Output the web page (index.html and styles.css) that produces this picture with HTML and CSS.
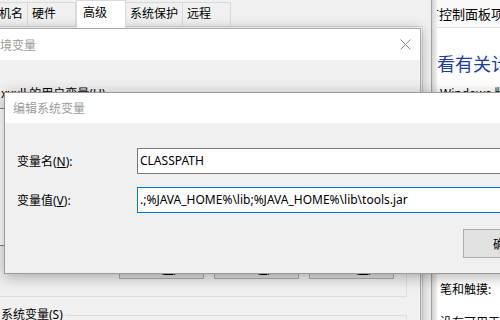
FILE: index.html
```html
<!DOCTYPE html>
<html lang="zh-CN">
<head>
    <meta charset="UTF-8">
    <title>编辑系统变量</title>
    <link rel="stylesheet" href="styles.css">
</head>
<body>
<div class="desk">

    <!-- control panel window, furthest back -->
    <div class="cpanel">
        <div class="cp-bar"><span class="cp-path">所有控制面板项</span></div>
        <div class="cp-body">
            <h1 class="cp-head">查看有关计算机的基本信息</h1>
            <ul class="cp-rows">
                <li>Windows 版本</li>
                <li>Windows 10 专业版</li>
                <li>© 2019 Microsoft Corporation</li>
                <li>系统</li>
                <li>处理器:</li>
                <li>已安装的内存(RAM):</li>
                <li>系统类型:</li>
                <li class="cp-pen">笔和触摸:</li>
                <li>没有可用于此显示器的笔或触控输入</li>
            </ul>
        </div>
    </div>

    <!-- system properties -->
    <div class="sysprop">
        <div class="tabs">
            <span class="tab">计算机名</span>
            <span class="tab">硬件</span>
            <span class="tab active">高级</span>
            <span class="tab">系统保护</span>
            <span class="tab">远程</span>
        </div>
        <div class="tab-panel"></div>
    </div>

    <!-- environment variables -->
    <div class="env">
        <div class="titlebar">
            <span class="title">环境变量</span>
            <svg class="close" width="11" height="11" viewBox="0 0 11 11">
                <path d="M0.5 0.5 L10.5 10.5 M10.5 0.5 L0.5 10.5" stroke="#8c8c8c" stroke-width="1" fill="none"/>
            </svg>
        </div>
        <div class="env-body">
            <fieldset class="group">
                <legend>xxxll 的用户变量(<u>U</u>)</legend>
                <div class="list"></div>
                <div class="btn-row">
                    <button class="btn">新建(<u>N</u>)...</button>
                    <button class="btn">编辑(<u>E</u>)...</button>
                    <button class="btn">删除(<u>D</u>)</button>
                </div>
            </fieldset>
            <fieldset class="group sys-group">
                <legend>系统变量(<u>S</u>)</legend>
                <div class="list"></div>
            </fieldset>
        </div>
    </div>

    <!-- edit system variable -->
    <div class="edit">
        <div class="titlebar edit-titlebar">
            <span class="title">编辑系统变量</span>
        </div>
        <div class="edit-body">
            <div class="field">
                <label class="field-label">变量名(<u>N</u>):</label>
                <div class="input">CLASSPATH</div>
            </div>
            <div class="field">
                <label class="field-label">变量值(<u>V</u>):</label>
                <div class="input focus">.;%JAVA_HOME%\lib;%JAVA_HOME%\lib\tools.jar</div>
            </div>
            <div class="edit-actions">
                <button class="btn big">确定</button>
                <button class="btn big">取消</button>
            </div>
        </div>
    </div>

</div>
</body>
</html>
```

FILE: styles.css
```css
body {
    margin: 0;
    font-family: "Noto Sans", "Noto Sans CJK SC", sans-serif;
    font-size: 12px;
    color: #000;
}

.desk {
    position: relative;
    width: 500px;
    height: 320px;
    overflow: hidden;
    background: #f0f0f0;
}

/* control panel */
.cpanel {
    position: absolute;
    left: 437px;
    top: 0;
    width: 200px;
    height: 320px;
    background: #fff;
    overflow: hidden;
}

.cp-bar {
    height: 27px;
    border-bottom: 1px solid #e3e3e3;
    background: #f9f9f9;
    display: flex;
    align-items: center;
    font-size: 13px;
    white-space: nowrap;
}

.cp-path {
    margin-left: -24px;
}

.cp-body {
    padding-left: 3px;
}

.cp-head {
    margin: 24px 0 0 -21px;
    font-size: 18px;
    font-weight: normal;
    line-height: 24px;
    color: #1e3f9a;
    white-space: nowrap;
}

.cp-rows {
    list-style: none;
    margin: 10px 0 0;
    padding: 0;
}

.cp-rows li {
    line-height: 16px;
    margin-bottom: 12px;
    white-space: nowrap;
}

.cp-rows .cp-pen {
    margin-bottom: 17px;
}

/* system properties */
.sysprop {
    position: absolute;
    left: -40px;
    top: -6px;
    width: 472px;
    height: 340px;
    padding-top: 5px;
    box-sizing: border-box;
    border: 1px solid #a0a0a0;
    background: #f0f0f0;
    box-shadow: 0 0 6px rgba(0, 0, 0, 0.25);
}

.tabs {
    display: flex;
    align-items: flex-end;
    height: 26px;
    padding-left: 9px;
}

.tab {
    box-sizing: border-box;
    height: 24px;
    min-width: 48px;
    padding: 0 4px;
    line-height: 22px;
    border: 1px solid #d9d9d9;
    border-left: 0;
    border-bottom: 0;
    background: #f0f0f0;
    white-space: nowrap;
}

.tab:first-child {
    border-left: 1px solid #d9d9d9;
}

.tab.active {
    position: relative;
    z-index: 1;
    height: 28px;
    min-width: 50px;
    margin-bottom: -2px;
    padding-left: 6px;
    line-height: 24px;
    border-left: 1px solid #d9d9d9;
    background: #fff;
}

.tab-panel {
    height: 300px;
    margin: 0 8px;
    border: 1px solid #d9d9d9;
    background: #fff;
}

/* dialogs */
.titlebar {
    height: 31px;
    padding: 0 9px 0 7px;
    display: flex;
    align-items: center;
    justify-content: space-between;
    background: #fff;
    color: #9b9b9b;
    white-space: nowrap;
}

.close {
    display: block;
}

.env {
    position: absolute;
    left: -20px;
    top: 28px;
    width: 439px;
    height: 320px;
    border: 1px solid #aaa;
    background: #f0f0f0;
    box-shadow: 0 2px 12px rgba(0, 0, 0, 0.3);
}

.env-body {
    padding: 26px 13px 0 8px;
}

.group {
    margin: 0;
    padding: 0 12px 17px 9px;
    border: 1px solid #dcdcdc;
    min-width: 0;
}

.group legend {
    padding: 0 2px;
    line-height: 16px;
    white-space: nowrap;
}

.sys-group {
    margin-top: 10px;
}

.list {
    box-sizing: border-box;
    height: 138px;
    margin-top: 6px;
    border: 1px solid #828282;
    background: #fff;
}

.btn-row {
    display: flex;
    justify-content: flex-end;
    gap: 10px;
    margin-top: 10px;
}

.btn {
    box-sizing: border-box;
    width: 85px;
    height: 23px;
    padding: 0;
    border: 1px solid #adadad;
    background: #e1e1e1;
    font-family: inherit;
    font-size: 12px;
    color: #000;
}

.btn.big {
    width: 84px;
    height: 29px;
}

.edit {
    position: absolute;
    left: 4px;
    top: 92px;
    width: 648px;
    border: 1px solid #9a9a9a;
    background: #f0f0f0;
    box-shadow: 0 3px 14px rgba(0, 0, 0, 0.3);
}

.edit-titlebar {
    height: 30px;
    padding-left: 8px;
}

.edit-body {
    padding: 25px 12px 15px;
}

.field {
    display: flex;
    align-items: center;
}

.field + .field {
    margin-top: 13px;
}

.field-label {
    width: 120px;
    flex: none;
}

.input {
    flex: 1;
    box-sizing: border-box;
    height: 26px;
    padding: 0 2px;
    line-height: 24px;
    border: 1px solid #7a7a7a;
    background: #fff;
    white-space: nowrap;
    overflow: hidden;
}

.input.focus {
    border-color: #0078d7;
}

.edit-actions {
    display: flex;
    justify-content: flex-end;
    gap: 10px;
    margin-top: 16px;
}
```
